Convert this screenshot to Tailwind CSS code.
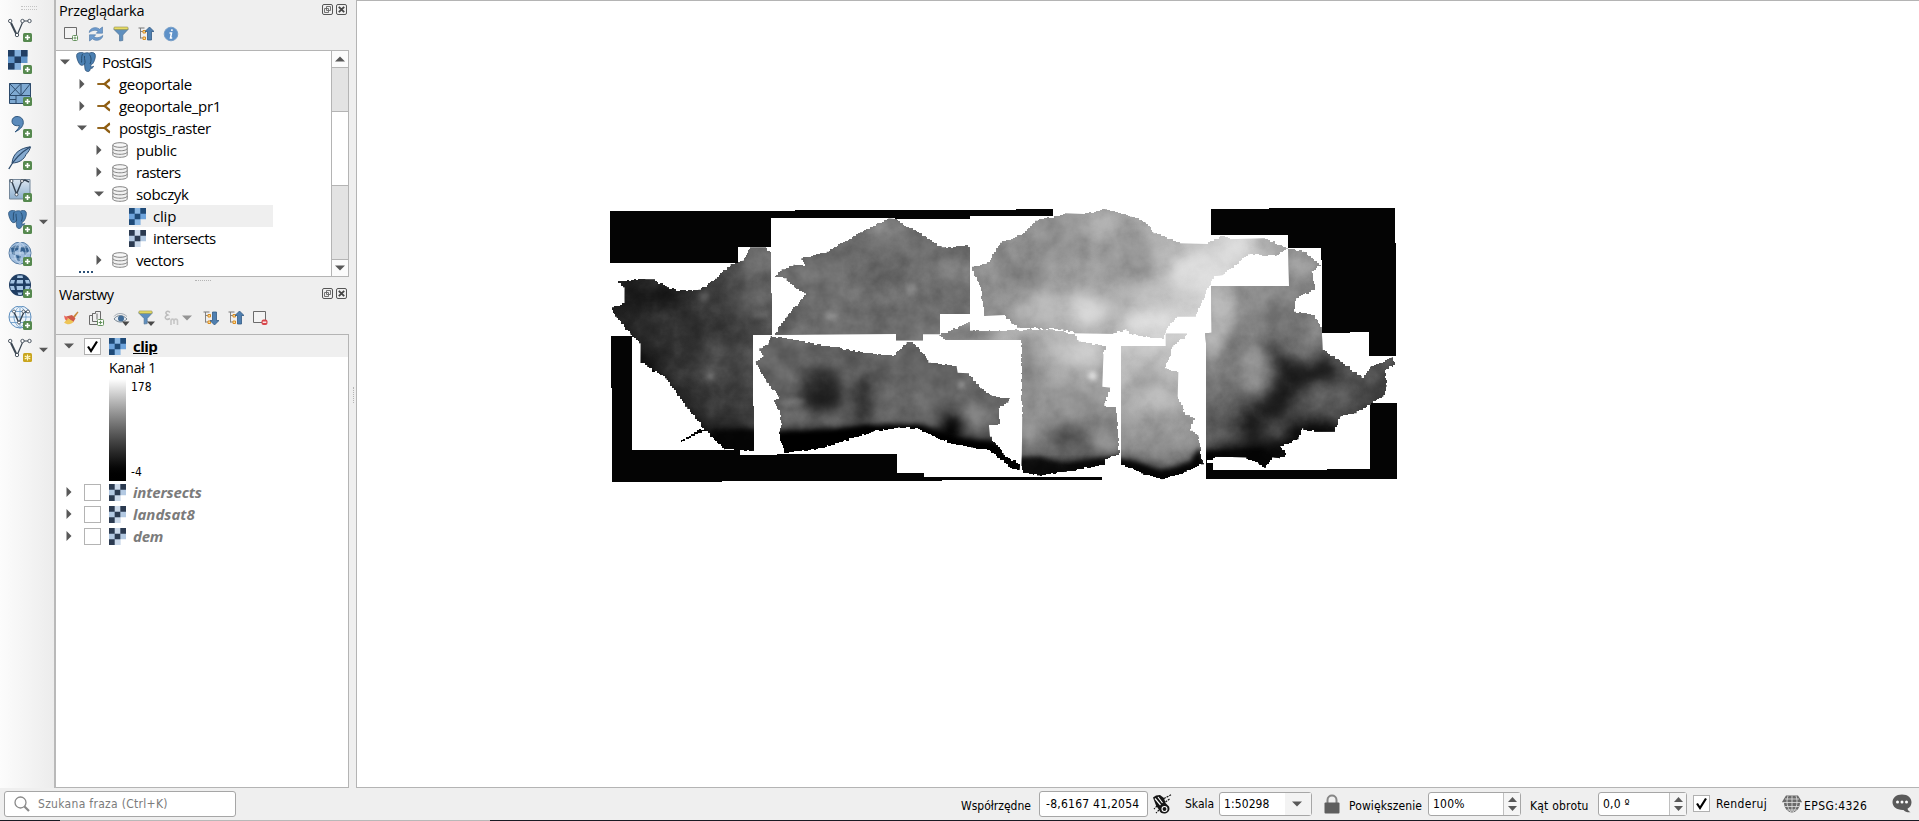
<!DOCTYPE html>
<html lang="pl">
<head>
<meta charset="utf-8">
<title>QGIS</title>
<script src="https://cdn.jsdelivr.net/npm/@tailwindcss/browser@4"></script>
</head>
<body class="w-[1919px] h-[821px] overflow-hidden bg-[#efefef] font-['Open_Sans',sans-serif] text-[15px] text-black">
<svg class="absolute size-0">
  <defs>
    <linearGradient id="pale" x1="0" y1="0" x2="0" y2="1"><stop offset="0" stop-color="#dbe6f0"/><stop offset="1" stop-color="#8fb0cf"/></linearGradient>
    <symbol id="plus" viewBox="0 0 9 9"><rect width="9" height="9" rx="1.500" fill="#56894f"/><path d="M4.500 2v5M2 4.500h5" stroke="#fff" stroke-width="1.600"/></symbol>
    <symbol id="vee" viewBox="0 0 24 24"><path d="M3 5 9 17.500" stroke="#3b4652" stroke-width="2"/><path d="M9.200 17 14.500 4.500M15.500 3h5" fill="none" stroke="#3b4652" stroke-width="1.200"/><g fill="#fff" stroke="#3b4652" stroke-width=".9"><circle cx="2.200" cy="3" r="1.700"/><circle cx="14.500" cy="3" r="1.700"/><circle cx="21.500" cy="3" r="1.700"/><circle cx="9" cy="17" r="1.700"/></g></symbol>
    <symbol id="rasterA" viewBox="0 0 18 18"><path fill="#6da3dc" d="M0 0h18v12h-6v6H0z"/><path fill="#8bb8e4" d="M6 0h6v6H6zM6 12h6v6H6z"/><path fill="#1f4a77" d="M0 0h6v6H0zM12 0h6v6h-6zM6 6h6v6H6zM0 12h6v6H0z"/></symbol>
    <symbol id="rasterB" viewBox="0 0 18 18"><path fill="#b3c9e2" d="M0 0h18v12h-6v6H0z"/><path fill="#cbd9ea" d="M6 0h6v6H6zM6 12h6v6H6z"/><path fill="#2b3a50" d="M0 0h6v6H0zM12 0h6v6h-6zM6 6h6v6H6zM0 12h6v6H0z"/></symbol>
    <symbol id="eleph" viewBox="0 0 20 20"><path d="M2.500 1C5 0 7 .5 8 1.300 10 .6 12 .6 13 1.200 15 0 18 .2 19 2c1 2-.2 6-1.500 8.500-.6 1.200-1.500 2-2.500 2l-.4 2.500c1 .1 2-.3 3-.7-.5 1.600-1.800 2.200-3.300 2.400C14 19 13 19.700 11.500 19.500c-2-.2-2.600-1.700-2.700-4.500L8.500 12C7 13.500 5.500 13.600 4.500 13 2.500 11.500.5 6 .6 3.500.7 2 1.500 1.300 2.500 1z" fill="#4c80b2" stroke="#2d5278" stroke-width=".8"/><path d="M6.500 2C5 5 6 8 5.500 10.500M8.500 12c1.500-1.500-.5-5 0-8M13.500 2.500c2 3 2 6 .5 9.500" fill="none" stroke="#244869" stroke-width=".9"/></symbol>
    <symbol id="conn" viewBox="0 0 14 12"><path d="M.3 6H8" stroke="#8f5e12" stroke-width="1.900"/><path d="M13 1.800C11.500 2 10 4.500 7.500 6c2.500 1.500 4 4 5.500 4.200" fill="none" stroke="#8f5e12" stroke-width="2.400"/></symbol>
    <symbol id="db" viewBox="0 0 16 16"><path d="M.8 3v10c0 1.300 3.200 2.300 7.200 2.300s7.200-1 7.200-2.300V3" fill="#f1f1f1" stroke="#858585"/><ellipse cx="8" cy="3" rx="7.200" ry="2.300" fill="#f6f6f6" stroke="#858585"/><path d="M.8 6.500c0 1.300 3.200 2.300 7.200 2.300s7.200-1 7.200-2.300M.8 10c0 1.300 3.200 2.300 7.200 2.300s7.200-1 7.200-2.300" fill="none" stroke="#858585"/></symbol>
    <symbol id="right" viewBox="0 0 6 10"><path d="M.5 0 5.500 5 .5 10z" fill="#585858"/></symbol>
    <symbol id="down" viewBox="0 0 10 6"><path d="M0 .5h10L5 5.500z" fill="#585858"/></symbol>
    <symbol id="up" viewBox="0 0 10 6"><path d="M0 5.500h10L5 .5z" fill="#585858"/></symbol>
    <symbol id="float" viewBox="0 0 11 11"><rect x=".5" y=".5" width="10" height="10" rx="1.500" fill="none" stroke="#555"/><path d="M4.500 2.500h4v4h-4zM2.500 4.500h4v4h-4z" fill="#efefef" stroke="#666" stroke-width=".9"/></symbol>
    <symbol id="close" viewBox="0 0 11 11"><rect x=".5" y=".5" width="10" height="10" rx="1.500" fill="none" stroke="#555"/><path d="m2.800 2.800 5.400 5.400m0-5.400L2.800 8.200" stroke="#444" stroke-width="1.800"/></symbol>
    <symbol id="funnel" viewBox="0 0 16 16"><path d="M1 2.500h14v1L9.800 9v5.500L6.500 15V9L1 3.500z" fill="#5f8fbe" stroke="#4f7396" stroke-width=".7"/><rect x="1" y="1" width="14" height="2.600" rx=".8" fill="#e8dc63" stroke="#8e8c48" stroke-width=".6"/></symbol>
    <symbol id="treebox" viewBox="0 0 16 16"><path d="M2.500 2v10.500M2.500 5.500h3M2.500 12h3" stroke="#777" stroke-width=".9" fill="none"/><path d="M.5 2h6" stroke="#777"/><path d="M5 4.500h2.500V7H5zM5 11h2.500v2.500H5z" fill="#f7e0a0" stroke="#dd8d20"/></symbol>
    <symbol id="arrowUp" viewBox="0 0 10 16"><path d="M5 1l4.500 4.500H7V14H3V5.500H.5z" fill="#4f7fb0" stroke="#325a84" stroke-width=".8"/></symbol>
    <symbol id="blank" viewBox="0 0 16 16"><path d="M1.500 1.500h12v11h-12z" fill="#f3f3f3" stroke="#6b6b6b"/></symbol>
  </defs>
</svg>

<div class="flex h-[788px]">
  <!-- Layer toolbar -->
  <div class="relative w-[54px] shrink-0 bg-linear-to-r from-[#fcfcfc] to-[#ececec]">
    <div class="flex flex-col gap-2 pt-[18px] pl-2">
      <div class="flex h-6"><svg class="size-6" viewBox="0 0 24 24"><use href="#vee" width="24" height="24"/><use href="#plus" x="15" y="15" width="9" height="9"/></svg></div>
      <div class="flex h-6"><svg class="size-6" viewBox="0 0 24 24"><path fill="#5f93c8" d="M0 0h19.500v13H13v6.500H0z"/><path fill="#85b0dc" d="M6.500 0H13v6.500H6.500zM6.500 13H13v6.500H6.500z"/><path fill="#213e63" d="M0 0h6.500v6.500H0zM13 0h6.500v6.500H13zM6.500 6.500H13V13H6.500zM0 13h6.500v6.500H0z"/><use href="#plus" x="15" y="15" width="9" height="9"/></svg></div>
      <div class="flex h-6"><svg class="size-6" viewBox="0 0 24 24"><path d="M1.500 1.500h21v20h-21z" fill="#7ea9d2" stroke="#2c4a6b"/><path d="M1.500 1.500 13 13.500M13 1.500 1.500 13.500M13 13.500l9.500-12M13 1.500v12M1.500 13.500h21M8 13.500v8M1.500 17.500H8" fill="none" stroke="#2c4a6b"/><use href="#plus" x="15" y="15" width="9" height="9"/></svg></div>
      <div class="flex h-6"><svg class="size-6" viewBox="0 0 24 24"><path d="M9 2.500c4 0 6.300 2.600 6.300 6C15.300 13 11 16 7 18c3-3 4.500-4.600 4.300-6.500C6.500 12.500 4 10 4 7.200 4 4.500 6.200 2.500 9 2.500z" fill="#5a8abb" stroke="#31587f"/><use href="#plus" x="15" y="15" width="9" height="9"/></svg></div>
      <div class="flex h-6"><svg class="size-6" viewBox="0 0 24 24"><path d="M22.500.8C13 2 5 6.500 4 17c7 0 12-3.500 14-8.500 2-2 4-5 4.500-7.700z" fill="#84a9cf" stroke="#2c4a6b"/><path d="M.8 23C5 15 12 7 22 1" fill="none" stroke="#2c4a6b" stroke-width="1.300"/><use href="#plus" x="15" y="15" width="9" height="9"/></svg></div>
      <div class="flex h-6"><svg class="size-6" viewBox="0 0 24 24"><path d="M1.500 1.500h20.500v19.500H1.500z" fill="url(#pale)" stroke="#75889b"/><path d="M4 4 8.500 16 13.500 4M14 3l3-1 4 2" fill="none" stroke="#33404e" stroke-width="1.400"/><g fill="#fff" stroke="#33404e" stroke-width=".8"><circle cx="3.500" cy="3" r="1.500"/><circle cx="14" cy="3" r="1.500"/><circle cx="8.500" cy="16.500" r="1.500"/></g><use href="#plus" x="15" y="15" width="9" height="9"/></svg></div>
      <div class="flex h-6 items-center gap-[7px]"><svg class="size-6" viewBox="0 0 24 24"><use href="#eleph" width="19" height="19"/><use href="#plus" x="15" y="15" width="9" height="9"/></svg><svg class="h-[6px] w-[9px]"><use href="#down"/></svg></div>
      <div class="flex h-6"><svg class="size-6" viewBox="0 0 24 24"><circle cx="12" cy="11" r="11" fill="#9dbbdc" stroke="#5a7fa6"/><path d="M3 6c3-3 6-3 8-2l-1 4-3 1v4l-3-1zM13 5l6-1 2 5-4 4-2-4-3 1zM8 13l5 1-1 5-3-1z" fill="#35618f"/><path d="M1 11h22M12 0v22M3 5h18M3 17h18M12 0C4 6 4 16 12 22M12 0c8 6 8 16 0 22" fill="none" stroke="#dce8f4" stroke-width=".5"/><use href="#plus" x="15" y="15" width="9" height="9"/></svg></div>
      <div class="flex h-6"><svg class="size-6" viewBox="0 0 24 24"><circle cx="12" cy="11" r="11" fill="#1f3d62"/><path d="M3 6h4L6 9.500H2zM9 6h6v3.500H8.500zM17 6h4l1 3.500h-4zM2 12h4l1 4H3zM8.500 12H15v4H9zM17.500 12H22l-1 4h-4zM9.500 1.500h5L15 4H9zM9.500 18.500h5l-1 2.500h-3z" fill="#a5c4e3"/><use href="#plus" x="15" y="15" width="9" height="9"/></svg></div>
      <div class="flex h-6"><svg class="size-6" viewBox="0 0 24 24"><circle cx="12" cy="11" r="11" fill="#eef4fa" stroke="#5f8fbe"/><path d="M1 11h22M12 0v22M3 5.500h18M3 16.500h18M12 0C4 6 4 16 12 22M12 0c8 6 8 16 0 22" fill="none" stroke="#6f9fcb" stroke-width=".9"/><path d="M6 6l5 11 5-11h4" fill="none" stroke="#33404e" stroke-width="1.400"/><g fill="#fff" stroke="#33404e" stroke-width=".8"><circle cx="6" cy="5.500" r="1.500"/><circle cx="15.500" cy="5.500" r="1.500"/><circle cx="20" cy="5.500" r="1.500"/><circle cx="11" cy="16.500" r="1.500"/></g><use href="#plus" x="15" y="15" width="9" height="9"/></svg></div>
      <div class="flex h-6 items-center gap-[7px]"><svg class="size-6" viewBox="0 0 24 24"><use href="#vee" width="24" height="24"/><rect x="15" y="15" width="9" height="9" rx="1.500" fill="#c9a51e"/><path d="M19.500 16.500v6M16.700 18l5.600 3M22.300 18l-5.600 3" stroke="#fff8c8" stroke-width="1.200"/></svg><svg class="h-[6px] w-[9px]"><use href="#down"/></svg></div>
    </div>
    <div class="absolute top-[6px] left-[21px] h-[4px] w-4 border-y border-dotted border-[#c4c4c4]"></div>
  </div>

  <!-- Docks -->
  <div class="w-[295px] shrink-0 flex flex-col border-l-2 border-[#b9b9b9]">
    <div class="h-[21px] shrink-0 flex items-center pl-[3px] pr-[2px]">
      <span class="grow whitespace-nowrap leading-5 text-[14.500px] tracking-[-0.2px]">Przeglądarka</span>
      <svg class="size-[11px] mr-[3px] -mt-[3px]"><use href="#float"/></svg><svg class="size-[11px] -mt-[3px]"><use href="#close"/></svg>
    </div>
    <div class="h-[29px] shrink-0 flex items-center gap-[9px] pl-[7px] pb-[3px]">
      <svg class="size-4" viewBox="0 0 16 16"><use href="#blank"/><rect x="9.500" y="9.500" width="5" height="5" rx="1" fill="#fff" stroke="#66935f"/><path d="M12 10.500v3M10.500 12h3" stroke="#66935f"/></svg>
      <svg class="size-4" viewBox="0 0 16 16"><path d="M1.200 6.500C1.500 2 8 0 11.500 3.200L14.500 1v6.200H8.300l1.800-2C7.500 3.500 4.500 4.200 1.200 6.500zM14.800 9.500C14.500 14 8 16 4.500 12.800L1.500 15V8.800h6.200l-1.800 2c2.600 1.700 5.600 1 8.900-1.300z" fill="#6e9bcd" stroke="#4c76a5" stroke-width=".6"/></svg>
      <svg class="size-4"><use href="#funnel"/></svg>
      <svg class="size-4" viewBox="0 0 16 16"><use href="#treebox"/><use href="#arrowUp" x="6.500" width="10" height="16"/></svg>
      <svg class="size-4" viewBox="0 0 16 16"><circle cx="8" cy="8" r="6.800" fill="#5e91c8" stroke="#7aa0c8"/><path d="M8.900 3.200v1.900M6.500 7h2l-1 5h1.700" stroke="#fff" stroke-width="1.500" fill="none"/></svg>
    </div>
    <div class="h-[227px] shrink-0 flex border border-l-0 border-[#b4b4b4] bg-white">
      <div class="grow overflow-hidden">
        <div class="flex h-[22px] items-center"><span class="flex w-[17px] justify-center"><svg class="h-[6px] w-[10px]"><use href="#down"/></svg></span><svg class="ml-[3px] mr-[6px] size-5"><use href="#eleph"/></svg><span class="tracking-[-0.6px]">PostGIS</span></div>
        <div class="flex h-[22px] items-center pl-[17px]"><span class="flex w-[17px] justify-center"><svg class="h-[10px] w-[6px]"><use href="#right"/></svg></span><svg class="ml-[7px] mr-[8px] h-3 w-[14px]"><use href="#conn"/></svg><span class="tracking-[-0.3px]">geoportale</span></div>
        <div class="flex h-[22px] items-center pl-[17px]"><span class="flex w-[17px] justify-center"><svg class="h-[10px] w-[6px]"><use href="#right"/></svg></span><svg class="ml-[7px] mr-[8px] h-3 w-[14px]"><use href="#conn"/></svg><span class="tracking-[-0.3px]">geoportale_pr1</span></div>
        <div class="flex h-[22px] items-center pl-[17px]"><span class="flex w-[17px] justify-center"><svg class="h-[6px] w-[10px]"><use href="#down"/></svg></span><svg class="ml-[7px] mr-[8px] h-3 w-[14px]"><use href="#conn"/></svg><span class="tracking-[-0.45px]">postgis_raster</span></div>
        <div class="flex h-[22px] items-center pl-[34px]"><span class="flex w-[17px] justify-center"><svg class="h-[10px] w-[6px]"><use href="#right"/></svg></span><svg class="ml-[5px] mr-[8px] size-4"><use href="#db"/></svg><span class="tracking-[-0.3px]">public</span></div>
        <div class="flex h-[22px] items-center pl-[34px]"><span class="flex w-[17px] justify-center"><svg class="h-[10px] w-[6px]"><use href="#right"/></svg></span><svg class="ml-[5px] mr-[8px] size-4"><use href="#db"/></svg><span class="tracking-[-0.6px]">rasters</span></div>
        <div class="flex h-[22px] items-center pl-[34px]"><span class="flex w-[17px] justify-center"><svg class="h-[6px] w-[10px]"><use href="#down"/></svg></span><svg class="ml-[5px] mr-[8px] size-4"><use href="#db"/></svg><span class="tracking-[-0.35px]">sobczyk</span></div>
        <div class="flex h-[22px] w-[217px] items-center bg-[#efefef] pl-[73px]"><svg class="mr-[7px] size-[17px]"><use href="#rasterA"/></svg><span class="tracking-[-0.2px]">clip</span></div>
        <div class="flex h-[22px] items-center pl-[73px]"><svg class="mr-[7px] size-[17px]"><use href="#rasterB"/></svg><span class="tracking-[-0.55px]">intersects</span></div>
        <div class="flex h-[22px] items-center pl-[34px]"><span class="flex w-[17px] justify-center"><svg class="h-[10px] w-[6px]"><use href="#right"/></svg></span><svg class="ml-[5px] mr-[8px] size-4"><use href="#db"/></svg><span class="tracking-[-0.45px]">vectors</span></div>
        <div class="ml-[23px] w-[14px] border-t-2 border-dotted border-[#2d5278]"></div>
      </div>
      <div class="flex w-[17px] shrink-0 flex-col border-l border-[#b4b4b4] bg-[#e3e3e3]">
        <div class="flex h-[17px] items-center justify-center border-b border-[#b4b4b4] bg-[#fbfbfb]"><svg class="h-[6px] w-[10px]"><use href="#up"/></svg></div>
        <div class="mt-[43px] h-[75px] border-y border-[#b4b4b4] bg-white"></div>
        <div class="mt-auto flex h-[17px] items-center justify-center border-t border-[#b4b4b4] bg-[#fbfbfb]"><svg class="h-[6px] w-[10px]"><use href="#down"/></svg></div>
      </div>
    </div>
    <div class="h-[7px] shrink-0 flex justify-center pt-[3px]"><div class="h-0 w-4 border-t border-dotted border-[#b4b4b4]"></div></div>
    <div class="h-[21px] shrink-0 flex items-center pl-[3px] pr-[2px]">
      <span class="grow whitespace-nowrap leading-5 text-[14.500px] tracking-[-0.5px]">Warstwy</span>
      <svg class="size-[11px] mr-[3px] -mt-[2px]"><use href="#float"/></svg><svg class="size-[11px] -mt-[2px]"><use href="#close"/></svg>
    </div>
    <div class="h-[29px] shrink-0 flex items-center pl-[7px] pb-[3px]">
      <svg class="size-4 mr-[9px]" viewBox="0 0 16 16"><path d="M10 6.500 14.500 1.500l1 .8L11.500 8z" fill="#c98a3a"/><path d="M3 6.500 9 5l3.500 3.500-2.500 4z" fill="#cf5a48"/><path d="M3.500 7.500 10.500 11.500C8.500 15 4 15 1 12.500c1.500-.5 2-2.500 2.500-5z" fill="#edc456"/><path d="M1 5.500 5 7.500l-1 3L2 9.500z" fill="#e8655a"/></svg>
      <svg class="size-4 mr-[9px]" viewBox="0 0 16 16"><path d="M1.500 5.500h3v-2h3V1.500h5v9M1.500 5.500v9h9M4.500 3.500v8h6M9 3.500v6" fill="none" stroke="#6b6b6b"/><rect x="9.500" y="9.500" width="6" height="6" rx="1" fill="#fff" stroke="#66935f"/><path d="M12.500 10.700v3.600M10.700 12.500h3.600" stroke="#66935f" stroke-width="1.200"/></svg>
      <svg class="size-[17px] mr-[8px]" viewBox="0 0 17 17"><path d="M1 9C4 4.500 10 4.500 14 9 10 13 5 13 1 9z" fill="#e4ebf2" stroke="#73828f"/><circle cx="8" cy="8.500" r="3" fill="#416c98"/><path d="M1 6.500C4 2.500 10 2.500 14 6.500" fill="none" stroke="#8b97a2" stroke-width=".8"/><path d="M9 11.500h7.500L12.700 16z" fill="#484848"/></svg>
      <svg class="size-[17px] mr-[8px]" viewBox="0 0 17 17"><use href="#funnel" width="15" height="15"/><path d="M9 11.500h8L13 16z" fill="#484848"/></svg>
      <svg class="size-4 mr-[3px]" viewBox="0 0 16 16"><path d="M7 2.500C4-.2.800 3 4.800 5 .2 6.500 2.500 11 7 8.500" fill="none" stroke="#bcbcbc" stroke-width="1.500"/><path d="M8 15v-4c0-2.500 3-2.500 3 0 0-2.500 3.500-2.500 3.500 0v4M11 14v-3" fill="none" stroke="#c6c6c6" stroke-width="1.600"/></svg>
      <svg class="h-[6px] w-[10px] mr-[11px] opacity-60"><use href="#down"/></svg>
      <svg class="size-4 mr-[9px]" viewBox="0 0 16 16"><use href="#treebox"/><g transform="matrix(1 0 0 -1 0 16)"><use href="#arrowUp" x="6.500" width="10" height="16"/></g></svg>
      <svg class="size-4 mr-[8px]" viewBox="0 0 16 16"><use href="#treebox"/><use href="#arrowUp" x="6.500" width="10" height="16"/></svg>
      <svg class="size-4" viewBox="0 0 16 16"><use href="#blank"/><rect x="9.500" y="9.500" width="6" height="5.500" rx="2" fill="#d8454a"/><path d="M10.700 12.200h3.600" stroke="#fff" stroke-width="1.300"/></svg>
    </div>
    <div class="grow border border-l-0 border-[#b4b4b4] bg-white">
      <div class="flex h-[22px] items-center bg-[#efefef] pl-[8px]"><svg class="h-[6px] w-[10px]"><use href="#down"/></svg><span class="ml-[10px] mr-2 flex size-[17px] items-center justify-center border border-[#b0b0b0] bg-white"><svg class="size-[13px]" viewBox="0 0 13 13"><path d="M2 6.500 5 11 11 1.500" fill="none" stroke="#000" stroke-width="2.200"/></svg></span><svg class="mr-[7px] size-[17px]"><use href="#rasterA"/></svg><span class="font-bold tracking-[-0.500px] underline text-black">clip</span></div>
      <div class="flex h-[21px] items-center pl-[53px] text-[14px] tracking-[-0.1px]">Kanał 1</div>
      <div class="mt-px flex h-[102px] pl-[53px]">
        <div class="w-[17px] bg-linear-to-b from-white to-black"></div>
        <div class="flex flex-col justify-between pl-[5px] font-['DejaVu_Sans_Condensed',sans-serif] text-[12px] leading-[17px] text-black"><span>178</span><span>-4</span></div>
      </div>
      <div class="flex h-[22px] items-center pl-[10px]"><svg class="h-[10px] w-[6px]"><use href="#right"/></svg><span class="ml-[12px] mr-2 size-[17px] border border-[#b4b4b4] bg-white"></span><svg class="mr-[7px] size-[17px]"><use href="#rasterB"/></svg><span class="font-bold italic text-[#7b7b7b] tracking-[-0.150px]">intersects</span></div>
      <div class="flex h-[22px] items-center pl-[10px]"><svg class="h-[10px] w-[6px]"><use href="#right"/></svg><span class="ml-[12px] mr-2 size-[17px] border border-[#b4b4b4] bg-white"></span><svg class="mr-[7px] size-[17px]"><use href="#rasterB"/></svg><span class="font-bold italic text-[#7b7b7b]">landsat8</span></div>
      <div class="flex h-[22px] items-center pl-[10px]"><svg class="h-[10px] w-[6px]"><use href="#right"/></svg><span class="ml-[12px] mr-2 size-[17px] border border-[#b4b4b4] bg-white"></span><svg class="mr-[7px] size-[17px]"><use href="#rasterB"/></svg><span class="font-bold italic text-[#7b7b7b] tracking-[-0.200px]">dem</span></div>
    </div>
  </div>
  <div class="w-[7px] shrink-0 pt-[387px] pl-[4px]"><div class="h-4 w-0 border-l border-dotted border-[#b4b4b4]"></div></div>

  <!-- Map canvas -->
  <div class="grow border border-r-0 border-[#b4b4b4] bg-white">
    <svg class="block h-[786px] w-[1562px]" viewBox="357 1 1562 786">
      <defs>
        <filter id="soft" x="-50%" y="-50%" width="200%" height="200%" color-interpolation-filters="sRGB"><feGaussianBlur stdDeviation="20"/></filter>
        <filter id="soft2" x="-50%" y="-50%" width="200%" height="200%" color-interpolation-filters="sRGB"><feGaussianBlur stdDeviation="8"/></filter>
        <filter id="grain" x="0" y="0" width="100%" height="100%" color-interpolation-filters="sRGB"><feTurbulence type="fractalNoise" baseFrequency="0.016" numOctaves="4" seed="8"/><feColorMatrix values="1.500 0 0 0 -.25  1.500 0 0 0 -.25  1.500 0 0 0 -.25  0 0 0 0 1"/></filter>
        <linearGradient id="g1" x1="0" y1=".3" x2="1" y2="0"><stop offset="0" stop-color="#222"/><stop offset=".55" stop-color="#383838"/><stop offset="1" stop-color="#606060"/></linearGradient>
        <linearGradient id="g5" x1="0" y1="0" x2="1" y2=".25"><stop offset="0" stop-color="#868686"/><stop offset=".5" stop-color="#a2a2a2"/><stop offset=".85" stop-color="#d4d4d4"/><stop offset="1" stop-color="#b0b0b0"/></linearGradient>
        <linearGradient id="g4" x1="0" y1="0" x2="0" y2="1"><stop offset="0" stop-color="#b8b8b8"/><stop offset=".4" stop-color="#a2a2a2"/><stop offset=".75" stop-color="#808080"/><stop offset=".86" stop-color="#606060"/><stop offset=".93" stop-color="#101010"/></linearGradient>
        <linearGradient id="g7" x1="0" y1="0" x2="0" y2="1"><stop offset="0" stop-color="#cfcfcf"/><stop offset=".45" stop-color="#aeaeae"/><stop offset=".78" stop-color="#8a8a8a"/><stop offset=".9" stop-color="#555"/><stop offset="1" stop-color="#050505"/></linearGradient>
        <linearGradient id="g6" x1="0" y1="0" x2=".6" y2="1"><stop offset="0" stop-color="#aaa"/><stop offset=".4" stop-color="#7c7c7c"/><stop offset=".8" stop-color="#4c4c4c"/><stop offset="1" stop-color="#333"/></linearGradient>
        <clipPath id="c1"><path data-stair="54,243 136,238 158,238 200,262 235,273 295,269 345,236 392,192 428,182 450,142 490,142 513,160 513,280 516,280 516,405 459,405 459,618 462,618 462,752 374,748 318,690 262,620 200,535 142,495 122,482 122,430 92,400 50,350 36,322 74,308 74,262"/></clipPath>
        <clipPath id="c2"><path data-stair="525,228 545,208 580,194 618,198 604,175 680,155 735,123 780,97 865,55 885,57 1025,142 1110,138 1110,342 1020,342 1020,403 969,403 969,422 888,422 888,402 519,405 560,350 618,280 585,262 560,235"/></clipPath>
        <clipPath id="c3"><path data-stair="512,408 780,456 876,468 920,426 935,426 978,475 985,488 1070,500 1073,518 1105,520 1140,565 1175,588 1230,596 1225,608 1195,625 1200,672 1167,678 1170,710 1185,730 1210,765 1260,795 1258,810 1230,800 1170,750 1120,742 1060,732 960,687 900,682 820,695 700,735 620,753 555,758 537,695 546,670 540,630 522,600 540,590 500,545 467,483 490,465 478,445 505,430"/></clipPath>
        <clipPath id="c4"><path data-stair="1018,405 1110,364 1110,392 1350,388 1420,402 1435,425 1518,438 1510,470 1507,560 1533,563 1513,618 1548,622 1557,765 1515,780 1515,795 1400,815 1320,826 1270,818 1265,790 1267,650 1263,420 1040,420"/></clipPath>
        <clipPath id="c5"><path data-stair="1116,200 1160,190 1200,128 1260,105 1305,62 1395,40 1450,42 1515,28 1590,50 1636,68 1660,100 1740,130 1820,132 1860,108 1890,118 1990,115 2064,146 2030,168 1950,163 1870,225 1843,228 1788,350 1735,350 1700,390 1692,417 1600,405 1580,388 1540,402 1430,400 1390,388 1260,383 1235,370 1215,345 1155,348 1140,255"/></clipPath>
        <clipPath id="c6"><path data-stair="1833,258 2067,258 2064,146 2110,155 2163,198 2135,215 2145,270 2090,295 2082,335 2140,345 2165,385 2168,450 2220,485 2285,534 2310,500 2375,472 2385,495 2355,510 2360,560 2350,590 2270,640 2222,650 2205,695 2150,695 2110,685 2095,718 2040,740 2058,765 2040,775 2020,772 1998,803 1978,790 1940,772 1850,770 1818,790 1818,430 1815,400 1835,398"/></clipPath>
        <clipPath id="c7"><path data-stair="1563,438 1697,438 1697,400 1770,400 1720,440 1695,505 1735,520 1733,590 1755,645 1785,655 1770,692 1795,710 1803,770 1812,793 1760,815 1690,838 1630,820 1563,790"/></clipPath>
      </defs>
      <g transform="translate(600 200) scale(.333333)">
        <g fill="#040404" shape-rendering="crispEdges">
          <path d="M30 33H585V30H1248V27H1359V48H1110V57H885V54H513V141H414V188H30z"/>
          <path d="M33 408H96V750H420V765H531V762H891V819H972V831H1506V839H1026V842H366V846H36V563H33z"/>
          <path d="M1833 27H2007V24H2385V130H2388V468H2307V396H2250V399H2166V180H2163V144H2064V104H1833z"/>
          <path d="M1818 788H1839V810H2181V807H2310V609H2391V836H1818z"/>
          <path d="M240 725h3v-4h6v-4h9v-6h9v-4h6v-6h9v-5h9v-6h6v-4h6v4h18v4h-15v4h-12v5h-9v5h-12v5h-6v5h-12v4h-9v3zM155 510h10v6h-10z"/>
        </g>
        <g clip-path="url(#c1)">
          <path fill="url(#g1)" d="M30 130H520V760H30z"/>
          <g filter="url(#soft)"><ellipse cx="150" cy="290" rx="110" ry="40" fill="#191919"/><ellipse cx="480" cy="180" rx="60" ry="50" fill="#727272"/><ellipse cx="460" cy="300" rx="60" ry="50" fill="#5c5c5c"/><ellipse cx="370" cy="385" rx="70" ry="12" fill="#222"/><ellipse cx="370" cy="490" rx="100" ry="65" fill="#484848"/><ellipse cx="190" cy="390" rx="70" ry="40" fill="#303030"/><path d="M60 380 150 490 330 720 310 760 20 500z" fill="#0c0c0c"/><path d="M300 690H480V780H300z" fill="#000"/></g>
          <g filter="url(#soft2)"><circle cx="312" cy="292" r="16" fill="#606060"/><ellipse cx="485" cy="345" rx="25" ry="7" fill="#808080"/><circle cx="330" cy="528" r="9" fill="#777"/><path d="M330 690H470V760H380z" fill="#050505"/></g>
        </g>
        <g clip-path="url(#c2)">
          <path fill="#6e6e6e" d="M500 40H1120V430H500z"/>
          <g filter="url(#soft)"><ellipse cx="860" cy="90" rx="70" ry="30" fill="#868686"/><ellipse cx="830" cy="220" rx="60" ry="80" fill="#656565"/><ellipse cx="1070" cy="210" rx="60" ry="35" fill="#868686"/><ellipse cx="1050" cy="275" rx="60" ry="25" fill="#666"/><ellipse cx="560" cy="370" rx="50" ry="40" fill="#5c5c5c"/></g>
          <g filter="url(#soft2)"><circle cx="935" cy="268" r="16" fill="#8c8c8c"/><ellipse cx="692" cy="350" rx="20" ry="11" fill="#929292"/></g>
        </g>
        <g clip-path="url(#c3)">
          <path fill="#646464" d="M450 400H1270V820H450z"/>
          <g filter="url(#soft)"><ellipse cx="665" cy="575" rx="60" ry="70" fill="#222"/><ellipse cx="788" cy="600" rx="22" ry="75" fill="#141414"/><ellipse cx="880" cy="590" rx="50" ry="45" fill="#6c6c6c"/><ellipse cx="770" cy="480" rx="30" ry="25" fill="#4a4a4a"/><ellipse cx="1135" cy="640" rx="40" ry="42" fill="#868686"/><ellipse cx="1055" cy="680" rx="35" ry="40" fill="#000"/><path d="M520 700 780 690 960 690 1060 705 1120 730 1200 735 1300 800V850H500z" fill="#000"/></g>
          <g filter="url(#soft2)"><circle cx="1083" cy="555" r="10" fill="#a4a4a4"/><ellipse cx="575" cy="605" rx="38" ry="9" fill="#7c7c7c"/><path d="M530 695 700 688 800 674 960 674 1060 712 1180 724 1290 800V850H500z" fill="#000"/></g>
        </g>
        <g clip-path="url(#c4)">
          <path fill="url(#g4)" d="M1000 360H1570V830H1000z"/>
          <g filter="url(#soft)"><ellipse cx="1020" cy="400" rx="180" ry="30" fill="#787878"/><ellipse cx="1280" cy="510" rx="24" ry="100" fill="#787878"/><ellipse cx="1440" cy="450" rx="80" ry="50" fill="#c8c8c8"/><ellipse cx="1410" cy="710" rx="55" ry="40" fill="#565656"/><ellipse cx="1520" cy="720" rx="40" ry="40" fill="#8e8e8e"/><ellipse cx="1290" cy="690" rx="25" ry="60" fill="#929292"/></g>
          <g filter="url(#soft2)"><circle cx="1478" cy="528" r="14" fill="#e2e2e2"/><path d="M1250 775 1310 768 1400 795 1520 772 1570 765V850H1250z" fill="#0a0a0a"/></g>
        </g>
        <g clip-path="url(#c5)">
          <path fill="url(#g5)" d="M1100 20H2080V430H1100z"/>
          <g filter="url(#soft)"><ellipse cx="1400" cy="330" rx="150" ry="55" fill="#b8b8b8"/><ellipse cx="1260" cy="220" rx="80" ry="50" fill="#878787"/><ellipse cx="1380" cy="120" rx="80" ry="50" fill="#8e8e8e"/><ellipse cx="1500" cy="75" rx="50" ry="35" fill="#b5b5b5"/><ellipse cx="1590" cy="170" rx="75" ry="80" fill="#989898"/><ellipse cx="1460" cy="335" rx="55" ry="45" fill="#d8d8d8"/><ellipse cx="1650" cy="370" rx="80" ry="40" fill="#dedede"/><ellipse cx="1800" cy="220" rx="85" ry="60" fill="#dedede"/><ellipse cx="1900" cy="150" rx="50" ry="30" fill="#dcdcdc"/><ellipse cx="2020" cy="130" rx="40" ry="20" fill="#969696"/></g>
        </g>
        <g clip-path="url(#c6)">
          <path fill="url(#g6)" d="M1810 140H2400V810H1810z"/>
          <g filter="url(#soft)"><ellipse cx="1865" cy="320" rx="50" ry="80" fill="#b8b8b8"/><ellipse cx="1835" cy="430" rx="30" ry="50" fill="#b8b8b8"/><ellipse cx="2100" cy="190" rx="40" ry="35" fill="#a6a6a6"/><ellipse cx="1950" cy="510" rx="60" ry="70" fill="#8c8c8c"/><ellipse cx="2150" cy="400" rx="40" ry="50" fill="#8c8c8c"/><path d="M1990 410 2060 470 2130 500 2190 460 2230 530 2110 560 2060 640 1970 720 1890 690 1890 650 2000 590 2040 540z" fill="#1c1c1c"/><ellipse cx="2200" cy="590" rx="60" ry="35" fill="#646464"/><ellipse cx="2030" cy="690" rx="50" ry="20" fill="#4a4a4a"/><ellipse cx="1865" cy="670" rx="45" ry="30" fill="#565656"/><path d="M1800 760 1900 735 2040 720 2090 660 2210 665 2260 700 2000 820 1800 800z" fill="#080808"/></g>
          <g filter="url(#soft2)"><path d="M1810 755 1900 748 1980 745 2030 770 1990 820 1810 800z" fill="#050505"/></g>
        </g>
        <g clip-path="url(#c7)">
          <path fill="url(#g7)" d="M1550 395H1820V845H1550z"/>
          <g filter="url(#soft)"><ellipse cx="1660" cy="590" rx="50" ry="45" fill="#bcbcbc"/><ellipse cx="1640" cy="540" rx="40" ry="30" fill="#989898"/><ellipse cx="1690" cy="740" rx="60" ry="35" fill="#8e8e8e"/></g>
          <g filter="url(#soft2)"><path d="M1550 775 1600 780 1680 812 1770 785 1800 740 1830 860H1550z" fill="#050505"/></g>
        </g>
        <g id="texture" class="mix-blend-soft-light opacity-25"></g>
      </g>
    </svg>
  </div>
</div>

<!-- Status bar -->
<div class="flex h-8 items-center font-['DejaVu_Sans_Condensed',sans-serif] text-[12px] text-black">
  <div class="ml-1 -mt-px flex h-[26px] w-[232px] shrink-0 items-center rounded-[3px] border border-[#a6a6a6] bg-white pl-[9px] text-[#7b7b7b]"><svg class="size-4 mr-2" viewBox="0 0 16 16"><circle cx="6.500" cy="6.500" r="5.500" fill="none" stroke="#8a8a8a" stroke-width="1.300"/><path d="m10.500 10.500 4.500 4.500" stroke="#8a8a8a" stroke-width="2.200"/></svg><span class="pt-px tracking-[0.3px]">Szukana fraza (Ctrl+K)</span></div>
  <span class="ml-[725px] w-[78px] shrink-0 whitespace-nowrap pt-[3px]">Współrzędne</span>
  <div class="-mt-px flex h-[26px] w-[109px] shrink-0 items-center rounded-[3px] border border-[#a6a6a6] bg-white pl-[6px] whitespace-nowrap tracking-[0.25px]">-8,6167 41,2054</div>
  <svg class="ml-1 h-5 w-5 shrink-0" viewBox="0 0 20 20"><path d="M1 3.500 4 1.500 8 1l4 3 1.500 5L17 12.500c1.500 4-1 6.500-4 7-3 .3-5-1-5.500-3L4 11.500z" fill="#161616"/><path d="M3 4.500 8.500 11M6 3l4.500 6" fill="none" stroke="#fff" stroke-width="1.200"/><circle cx="12.500" cy="15" r="2.500" fill="none" stroke="#fff" stroke-width="1.100"/><path d="M12 4.500 19 .8M13.500 8l4-3M5 12l-3 3M7 16l-3 3" fill="none" stroke="#161616" stroke-width="1.200" stroke-dasharray="2 1"/></svg>
  <span class="ml-[13px] w-[34px] shrink-0">Skala</span>
  <div class="-mt-px flex h-6 w-[93px] shrink-0 items-center justify-between rounded-[3px] border border-[#a6a6a6] bg-white pl-1"><span class="tracking-[0.1px]">1:50298</span><span class="flex h-full w-[26px] items-center justify-center bg-[#f3f3f3] pr-[2px]"><svg class="h-[6px] w-[10px]"><use href="#down"/></svg></span></div>
  <svg class="ml-3 h-5 w-4 shrink-0" viewBox="0 0 16 20"><path d="M3.500 9V6c0-6 9-6 9 0v3" fill="none" stroke="#868686" stroke-width="2"/><rect x=".5" y="8.500" width="15" height="11" rx="1" fill="#5e5e5e"/></svg>
  <span class="ml-[9px] w-[79px] shrink-0 whitespace-nowrap pt-[3px] tracking-[0.1px]">Powiększenie</span>
  <div class="-mt-px flex h-6 w-[93px] shrink-0 items-center justify-between rounded-[3px] border border-[#a6a6a6] bg-white pl-1"><span class="tracking-[0.2px]">100%</span><span class="flex h-full w-[17px] flex-col items-center justify-center gap-[4px] border-l border-[#c0c0c0] bg-[#f5f5f5]"><svg class="h-[5px] w-[9px]" viewBox="0 0 9 5"><path d="M0 5 4.500 0 9 5z" fill="#585858"/></svg><svg class="h-[5px] w-[9px]" viewBox="0 0 9 5"><path d="M0 0h9L4.500 5z" fill="#585858"/></svg></span></div>
  <span class="ml-[9px] w-[68px] shrink-0 whitespace-nowrap pt-[3px] tracking-[0.2px]">Kąt obrotu</span>
  <div class="-mt-px flex h-6 w-[89px] shrink-0 items-center justify-between rounded-[3px] border border-[#a6a6a6] bg-white pl-1"><span class="tracking-[0.2px]">0,0 º</span><span class="flex h-full w-[17px] flex-col items-center justify-center gap-[4px] border-l border-[#c0c0c0] bg-[#f5f5f5]"><svg class="h-[5px] w-[9px]" viewBox="0 0 9 5"><path d="M0 5 4.500 0 9 5z" fill="#585858"/></svg><svg class="h-[5px] w-[9px]" viewBox="0 0 9 5"><path d="M0 0h9L4.500 5z" fill="#585858"/></svg></span></div>
  <span class="-mt-px ml-[6px] flex size-[17px] shrink-0 items-center justify-center border border-[#b0b0b0] bg-white"><svg class="size-[13px]" viewBox="0 0 13 13"><path d="M2 6.500 5 11 11 1.500" fill="none" stroke="#000" stroke-width="2.200"/></svg></span>
  <span class="ml-[6px] w-[66px] shrink-0 whitespace-nowrap tracking-[0.35px]">Renderuj</span>
  <svg class="-mt-px h-[18px] w-5 shrink-0" viewBox="0 0 20 18"><path d="M4 .5h12L20 7l-2 1c0 5-4 9.500-8 9.500S2 13 2 8L0 7z" fill="#6a6a6a"/><path d="M1 7.500h18M3 4h14M3 11.500h14M5 15h10M10 .8V17M6 1c-2 5-1 12 3 16M14 1c2 5 1 12-3 16" fill="none" stroke="#e4e4e4" stroke-width=".8"/></svg>
  <span class="ml-[2px] w-[88px] shrink-0 whitespace-nowrap pt-[3px] tracking-[0.4px]">EPSG:4326</span>
  <svg class="-mt-px h-[19px] w-5 shrink-0" viewBox="0 0 20 19"><path d="M10 .5c6 0 9.500 3.500 9.500 7.800 0 3-1.500 5.200-4 6.400.3 1.500 1.500 2.800 3 3.500-3 .4-5.500-.7-7-2.300C5 16.200.5 13 .5 8.300.5 4 4 .5 10 .5z" fill="#5a5a5a"/><g fill="#fff"><circle cx="5.500" cy="8" r="1.500"/><circle cx="10" cy="8" r="1.500"/><circle cx="14.500" cy="8" r="1.500"/></g></svg>
</div>
<div class="flex h-px bg-[#191923]"><div class="ml-[60px] w-[430px] bg-[#b8b8b8]"></div></div>

<script>
// Raster cells are square: sloping outline segments become stair steps of one cell.
const cell = 3;
const snap = v => Math.round(v / cell) * cell;
const texture = document.getElementById('texture');
document.querySelectorAll('path[data-stair]').forEach((path, index) => {
  const pts = path.dataset.stair.split(' ').map(p => p.split(',').map(Number));
  let d = '';
  let seed = index * 17 + 3;
  const rand = () => (seed = (seed * 16807) % 2147483647) / 2147483647 - 0.5;
  pts.forEach((p, i) => {
    const q = pts[(i + 1) % pts.length];
    const dx = q[0] - p[0], dy = q[1] - p[1];
    d += (i ? 'L' : 'M') + p[0] + ' ' + p[1];
    if (Math.abs(dx) <= 3 || Math.abs(dy) <= 3) return;
    const n = Math.max(1, Math.round(Math.hypot(dx, dy) / 7));
    for (let k = 1; k < n; k++) {
      d += 'H' + snap(p[0] + dx * k / n + rand() * 5) + 'V' + snap(p[1] + dy * k / n + rand() * 5);
    }
    d += 'H' + q[0];
  });
  path.setAttribute('d', d + 'z');
  path.setAttribute('shape-rendering', 'crispEdges');
  const g = document.createElementNS('http://www.w3.org/2000/svg', 'g');
  g.setAttribute('clip-path', 'url(#c' + (index + 1) + ')');
  g.innerHTML = '<rect width="2400" height="860" filter="url(#grain)"/>';
  texture.appendChild(g);
});
</script>
</body>
</html>
